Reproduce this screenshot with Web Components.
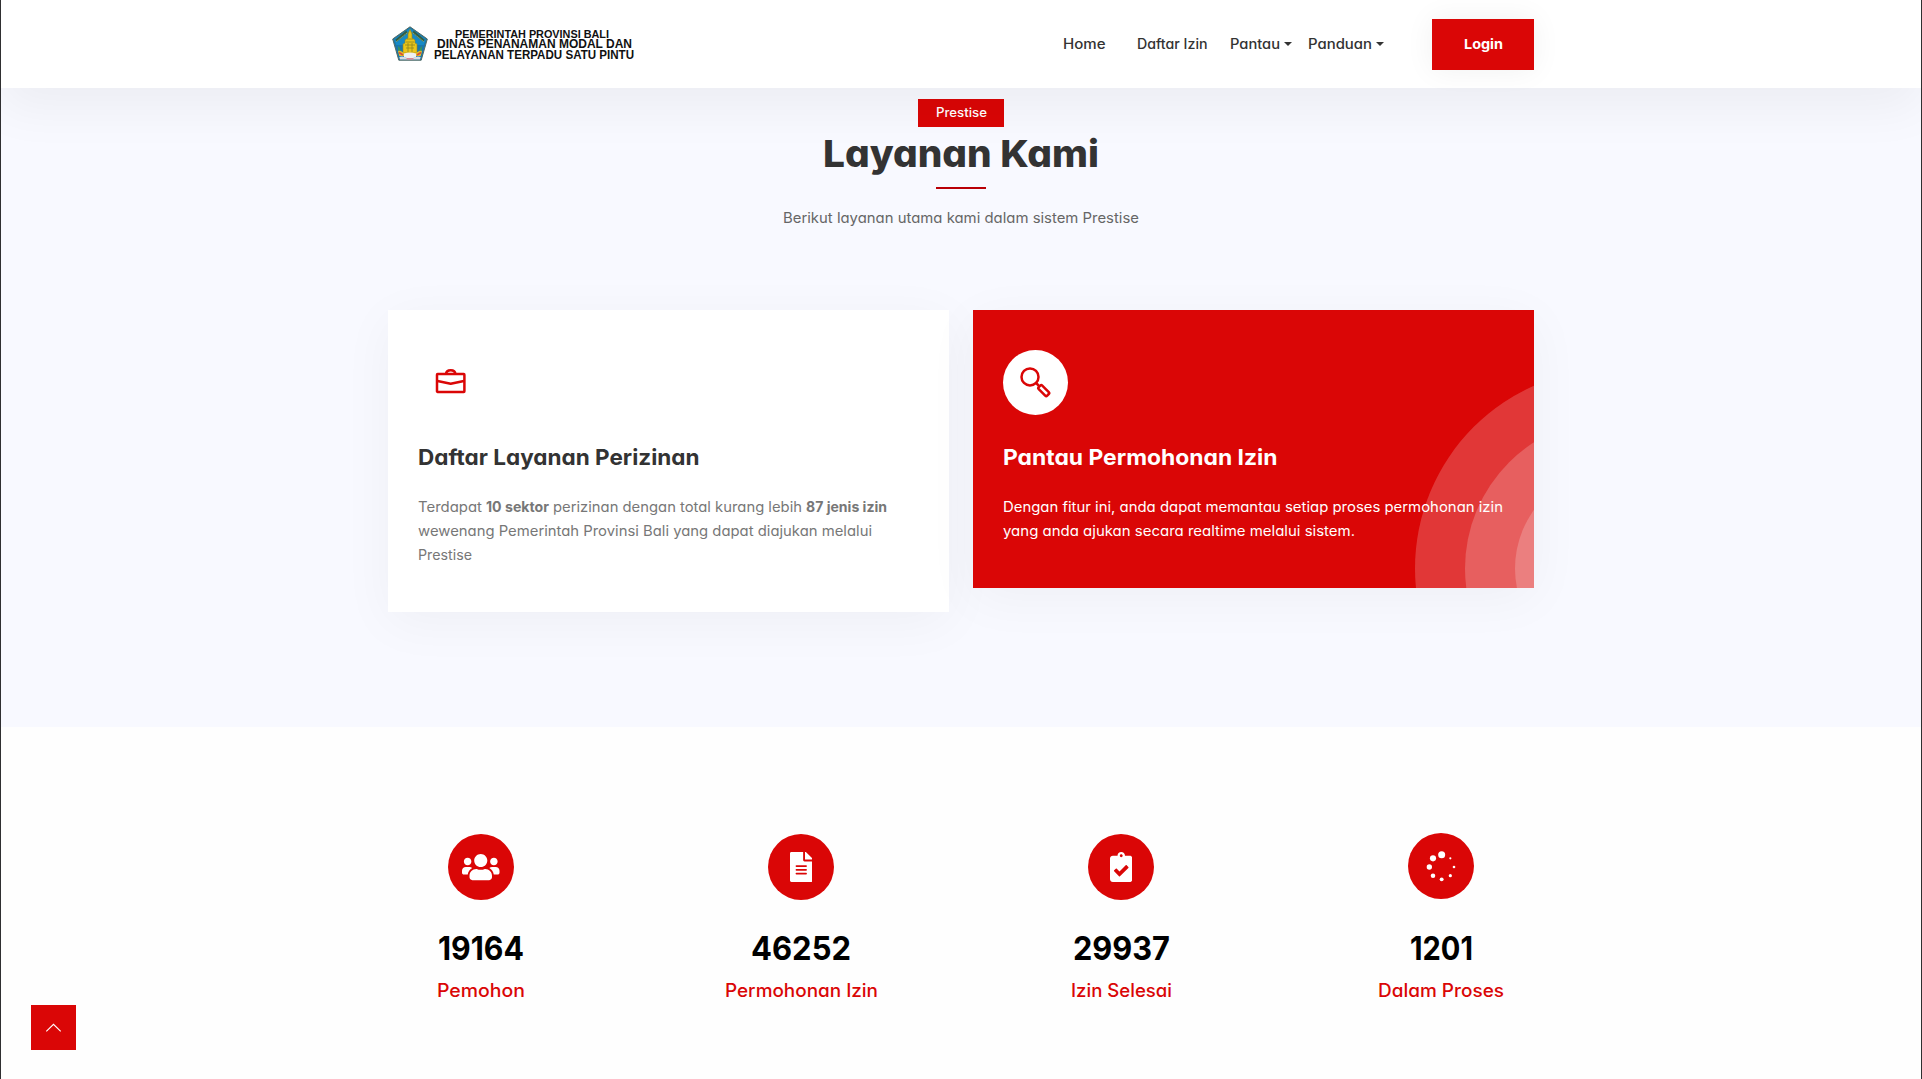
<!DOCTYPE html>
<html lang="id">
<head>
<meta charset="utf-8">
<title>Prestise</title>
<style>
  html, body { margin: 0; height: 100%; }
  body { font-family: Inter, "Open Sans", sans-serif; font-feature-settings: "cv11"; background: #fefefe; overflow: hidden; }
</style>
</head>
<body>
<prestise-page></prestise-page>
<script>
const ICONS = {
  briefcase: `<svg width="32" height="29" viewBox="0 0 32 29" fill="none" stroke="#da0606" stroke-width="2.5" stroke-linejoin="round"><rect x="2" y="6.1" width="27.4" height="17.8" rx=".6"/><path d="M11 6C11.2 3.4 13 2.2 15.700 2.2s4.500 1.200 4.700 3.800M2.500 13 15.700 15.700l13.200-2.700"/></svg>`,
  search: `<svg width="32" height="32" viewBox="0 0 32 32" fill="none" stroke="#da0606" stroke-width="2.5" stroke-linejoin="round"><circle cx="10" cy="9.900" r="8.500"/><path d="m16.100 16 2.800 2.800"/><rect x="-2.500" y="0" width="5" height="12" rx="1.400" transform="translate(19.500 19.300) rotate(-45)"/></svg>`,
  users: `<svg width="37.5" height="30" viewBox="0 0 640 512" fill="#fff"><path d="M96 224c35.300 0 64-28.700 64-64s-28.700-64-64-64-64 28.700-64 64 28.700 64 64 64zm448 0c35.300 0 64-28.700 64-64s-28.700-64-64-64-64 28.700-64 64 28.700 64 64 64zm32 32h-64c-17.600 0-33.500 7.100-45.100 18.600 40.300 22.100 68.900 62 75.100 109.400h66c17.700 0 32-14.300 32-32v-32c0-35.300-28.700-64-64-64zm-256 0c61.900 0 112-50.100 112-112S381.900 32 320 32 208 82.100 208 144s50.100 112 112 112zm76.800 32h-8.300c-20.800 10-43.900 16-68.500 16s-47.600-6-68.500-16h-8.300C179.600 288 128 339.600 128 403.200V432c0 26.500 21.500 48 48 48h288c26.500 0 48-21.500 48-48v-28.800c0-63.600-51.600-115.200-115.200-115.200zm-223.700-13.400C161.500 263.100 145.600 256 128 256H64c-35.300 0-64 28.700-64 64v32c0 17.700 14.300 32 32 32h65.900c6.300-47.400 34.900-87.300 75.200-109.400z"/></svg>`,
  file: `<svg width="22.5" height="30" viewBox="0 0 384 512" fill="#fff"><path d="M224 136V0H24C10.700 0 0 10.700 0 24v464c0 13.300 10.700 24 24 24h336c13.300 0 24-10.700 24-24V160H248c-13.200 0-24-10.800-24-24zm64 236c0 6.600-5.400 12-12 12H108c-6.600 0-12-5.400-12-12v-8c0-6.600 5.400-12 12-12h168c6.600 0 12 5.400 12 12v8zm0-64c0 6.600-5.400 12-12 12H108c-6.600 0-12-5.400-12-12v-8c0-6.600 5.400-12 12-12h168c6.600 0 12 5.400 12 12v8zm0-72v8c0 6.600-5.400 12-12 12H108c-6.600 0-12-5.400-12-12v-8c0-6.600 5.400-12 12-12h168c6.600 0 12 5.400 12 12zm96-114.100v6.100H256V0h6.100c6.400 0 12.500 2.500 17 7l97.900 98c4.500 4.500 7 10.600 7 16.900z"/></svg>`,
  clipboard: `<svg width="22.5" height="30" viewBox="0 0 384 512" fill="#fff"><path d="M336 64h-80c0-35.300-28.700-64-64-64s-64 28.700-64 64H48C21.500 64 0 85.500 0 112v352c0 26.500 21.500 48 48 48h288c26.500 0 48-21.500 48-48V112c0-26.500-21.500-48-48-48zM192 40c13.300 0 24 10.700 24 24s-10.700 24-24 24-24-10.700-24-24 10.700-24 24-24zm121.200 231.800l-143 141.800c-4.700 4.700-12.300 4.600-17-.1l-82.600-83.300c-4.700-4.700-4.600-12.300.1-17L99.100 285c4.700-4.700 12.300-4.600 17 .1l46 46.400 106-105.200c4.700-4.700 12.300-4.600 17 .1l28.200 28.400c4.700 4.800 4.600 12.300-.1 17z"/></svg>`,
  spinner: `<svg width="66" height="66" viewBox="0 0 198 198" fill="#fff"><circle cx="101" cy="65" r="10.500"/><circle cx="75" cy="76" r="9.200"/><circle cx="64" cy="102" r="8"/><circle cx="75" cy="128" r="6.800"/><circle cx="101" cy="139" r="5.800"/><circle cx="127" cy="128" r="4.800"/><circle cx="138" cy="102" r="3.900"/><circle cx="127" cy="76" r="3.300"/></svg>`,
  up: `<svg width="17" height="10" viewBox="0 0 17 10" fill="none" stroke="#fff" stroke-width="1.1"><path d="m1.300 8.300 7.200-7 7.200 7"/></svg>`,
  crest: `<svg width="36" height="36" viewBox="0 0 36 36"><path d="M18 .8 35.300 13 29.200 34.200H6.800L.7 13z" fill="#1976ad" stroke="#526b62" stroke-width="1"/><path d="M18 2.200 33.800 13.300 31.800 19H4.200L2.200 13.300z" fill="#168ac7"/><path d="M4 14.800 15 5.800M32 14.800 21 5.800" stroke="#315e46" stroke-width="2.600"/><path d="M4.500 15.500 15.500 6.600M31.500 15.500 20.500 6.600" stroke="#a9b971" stroke-width="1" stroke-dasharray="1.500 1"/><path d="M18 3.300 20 8v4l3 2v3l2 1v9H11v-9l2-1v-3l3-2V8z" fill="#e9c51a" stroke="#99851c" stroke-width=".6"/><path d="M15 13h6M14 16h8M13 19h10M14 22h8M16 17v9M20 17v9" stroke="#8d861f" stroke-width=".8"/><path d="M6 20c2 2 2.500 3 3 6l-2 3zM30 20c-2 2-2.500 3-3 6l2 3z" fill="#3c9850"/><path d="M6 25c4-1 5 3 8 2h8c3 1 4-3 8-2l-1.300 5H7.300z" fill="#e4bd2a"/><path d="M7 26.500l4 2.500M29 26.500 25 29" stroke="#d94b39" stroke-width="1.500"/><path d="M12 27.500q6-2 12 0v4q-6 1.500-12 0z" fill="#eef0f1"/><path d="M7.300 31q4-1.500 7 1h7.400q3-2.500 7-1l-.8 2.500H8z" fill="#d7dce4"/><path d="M14.500 32h7v1.600h-7z" fill="#d78792"/></svg>`
};

class UiIcon extends HTMLElement {
  connectedCallback() {
    this.attachShadow({ mode: "open" }).innerHTML =
      `<style>:host{display:flex;flex:none}svg{display:block}</style>${ICONS[this.getAttribute("name")]}`;
  }
}
customElements.define("ui-icon", UiIcon);

/* One line of text, its glyphs widened so that it fills the measure given in "w" (px). */
class FitText extends HTMLElement {
  connectedCallback() {
    this.attachShadow({ mode: "open" }).innerHTML =
      `<style>:host{display:inline-block;white-space:nowrap}span{display:inline-block;transform-origin:0 50%}</style><span><slot></slot></span>`;
    const span = this.shadowRoot.querySelector("span");
    const target = parseFloat(this.getAttribute("w"));
    const natural = span.getBoundingClientRect().width;
    this.style.width = target + "px";
    span.style.marginRight = (target - natural) + "px";
    span.style.transform = `scaleX(${(target / natural).toFixed(5)})`;
  }
}

class NavItem extends HTMLElement {
  connectedCallback() {
    this.attachShadow({ mode: "open" }).innerHTML = `<style>
      :host{display:flex;align-items:center;font-size:13.800px;line-height:20px;font-weight:500;color:#333}
      i{width:0;height:0;border:4px solid transparent;border-top-color:#333;border-bottom:0;margin-left:4px}
      </style><slot></slot>${this.hasAttribute("menu") ? "<i></i>" : ""}`;
  }
}
customElements.define("nav-item", NavItem);

class SiteHeader extends HTMLElement {
  connectedCallback() {
    this.attachShadow({ mode: "open" }).innerHTML = `<style>
      :host{display:flex;position:relative;z-index:2;height:88px;box-sizing:border-box;background:#fff;padding:0 387px 0 391px;align-items:center;justify-content:space-between;box-shadow:0 20px 50px rgba(0,0,0,.05)}
      .brand{display:flex;align-items:flex-start;gap:6px;padding-bottom:1px}
      .name{display:flex;flex-direction:column;align-items:center;font:700 12px/11px "Liberation Sans",Arial,sans-serif;color:#111;padding-top:3px}
      .name .top{font-size:11px;line-height:10px;margin-right:4px}
      nav{display:flex;align-items:center}
      .home{margin-right:31px}.reg{margin-right:23px}.track{margin-right:16px}.guide{margin-right:48px}
      .login{display:flex;width:102px;height:51px;align-items:center;justify-content:center;background:#da0606;color:#fff;font-weight:700;font-size:13.800px;line-height:20px;box-shadow:0 0 30px rgba(0,0,0,.06)}
      </style>
      <div class="brand"><ui-icon name="crest"></ui-icon>
        <div class="name"><fit-text class="top" w="154">PEMERINTAH PROVINSI BALI</fit-text><fit-text w="195">DINAS PENANAMAN MODAL DAN</fit-text><fit-text w="200">PELAYANAN TERPADU SATU PINTU</fit-text></div>
      </div>
      <nav>
        <nav-item class="home"><fit-text w="42.500">Home</fit-text></nav-item>
        <nav-item class="reg"><fit-text w="70.500">Daftar Izin</fit-text></nav-item>
        <nav-item class="track" menu><fit-text w="50">Pantau</fit-text></nav-item>
        <nav-item class="guide" menu><fit-text w="64">Panduan</fit-text></nav-item>
        <div class="login"><fit-text w="39">Login</fit-text></div>
      </nav>`;
  }
}

class SectionTitle extends HTMLElement {
  connectedCallback() {
    this.attachShadow({ mode: "open" }).innerHTML = `<style>
      :host{display:flex;flex-direction:column;align-items:center}
      .tag{display:flex;width:86px;height:28px;align-items:center;justify-content:center;background:#da0606;color:#fff;font-size:12.800px;line-height:18px;font-weight:500}
      h2{margin:4px 0 0;font-size:37.500px;line-height:46px;font-weight:800;color:#333}
      hr{width:50px;height:2px;border:0;margin:10px 0 0;background:#b90006}
      p{margin:19px 0 0;font-size:14.600px;line-height:20px;color:#666}
      </style>
      <div class="tag"><fit-text w="51">Prestise</fit-text></div>
      <h2><fit-text w="276">Layanan Kami</fit-text></h2><hr>
      <p><fit-text w="356">Berikut layanan utama kami dalam sistem Prestise</fit-text></p>`;
  }
}

class ServiceCard extends HTMLElement {
  connectedCallback() {
    this.attachShadow({ mode: "open" }).innerHTML = `<style>
      :host{display:block;box-sizing:border-box;width:561px;padding:40px 30px 0 30px;position:relative;background:#fff;color:#777;box-shadow:0 10px 50px rgba(0,0,0,.045);height:302px}
      :host([active]){background:#da0606;color:#fff;height:278px}
      .icon{display:flex;width:65px;height:65px;border-radius:50%;background:#fff;align-items:center;justify-content:center}
      .content{position:relative}
      .title{margin-top:27px;font-size:22px;line-height:30px;font-weight:650;color:#333;height:30px}
      :host([active]) .title{color:#fff}
      .text{margin-top:23px;font-size:14.200px;line-height:24px;display:flex;flex-direction:column;align-items:flex-start}
      .rings{position:absolute;inset:0;width:561px;height:278px;display:none}
      :host([active]) .rings{display:block}
      </style>
      <svg class="rings" viewBox="0 0 561 278" fill="#fff" fill-opacity=".2"><circle cx="642" cy="258.500" r="200"/><circle cx="642" cy="258.500" r="150"/><circle cx="642" cy="258.500" r="100"/></svg>
      <div class="content"><div class="icon"><ui-icon name="${this.getAttribute("icon")}"></ui-icon></div>
      <div class="title"><slot name="title"></slot></div>
      <div class="text"><slot></slot></div></div>`;
  }
}

class StatItem extends HTMLElement {
  connectedCallback() {
    const a = k => this.getAttribute(k);
    this.attachShadow({ mode: "open" }).innerHTML = `<style>
      :host{display:flex;flex-direction:column;align-items:center;width:320px}
      .disc{display:flex;width:66px;height:66px;border-radius:50%;background:#da0606;align-items:center;justify-content:center}
      .num{margin-top:28px;font-size:33px;line-height:40px;font-weight:650;color:#000}
      .label{margin-top:9px;font-size:18.300px;line-height:26px;font-weight:500;color:#da0606}
      :host([raised]) .disc{margin:-1px 0 1px}
      </style>
      <div class="disc"><ui-icon name="${a("icon")}"></ui-icon></div>
      <div class="num"><fit-text w="${a("nw")}">${a("value")}</fit-text></div>
      <div class="label"><fit-text w="${a("lw")}">${a("label")}</fit-text></div>`;
  }
}

class ToTop extends HTMLElement {
  connectedCallback() {
    this.attachShadow({ mode: "open" }).innerHTML = `<style>
      :host{position:absolute;left:30px;bottom:29px;width:45px;height:45px;display:flex;align-items:center;justify-content:center;background:#da0606}
      </style><ui-icon name="up"></ui-icon>`;
  }
}
customElements.define("to-top", ToTop);

class PrestisePage extends HTMLElement {
  connectedCallback() {
    this.attachShadow({ mode: "open" }).innerHTML = `<style>
      :host{display:block;position:relative;box-sizing:border-box;height:1079px;border-left:1px solid #2f2f31;border-right:1px solid #2f2f31;background:#fefefe;overflow:hidden}
      .services{height:639px;background:#f8f9ff;box-sizing:border-box;padding-top:11px}
      .cards{display:flex;justify-content:center;align-items:flex-start;gap:24px;margin-top:82px}
      .stats{display:flex;justify-content:center;padding-top:107px}
      b{font-weight:700}
      .row{display:flex;gap:4px}
      </style>
      <site-header></site-header>
      <section class="services">
        <section-title></section-title>
        <div class="cards">
          <service-card icon="briefcase">
            <fit-text slot="title" w="281.500">Daftar Layanan Perizinan</fit-text>
            <div class="row"><fit-text w="64">Terdapat</fit-text><b><fit-text w="63">10 sektor</fit-text></b><fit-text w="249">perizinan dengan total kurang lebih</fit-text><b><fit-text w="81">87 jenis izin</fit-text></b></div>
            <fit-text w="454">wewenang Pemerintah Provinsi Bali yang dapat diajukan melalui</fit-text>
            <fit-text w="54">Prestise</fit-text>
          </service-card>
          <service-card icon="search" active>
            <fit-text slot="title" w="274.500">Pantau Permohonan Izin</fit-text>
            <fit-text w="500">Dengan fitur ini, anda dapat memantau setiap proses permohonan izin</fit-text>
            <fit-text w="352">yang anda ajukan secara realtime melalui sistem.</fit-text>
          </service-card>
        </div>
      </section>
      <section class="stats">
        <stat-item icon="users" value="19164" nw="86" label="Pemohon" lw="88"></stat-item>
        <stat-item icon="file" value="46252" nw="100" label="Permohonan Izin" lw="153"></stat-item>
        <stat-item icon="clipboard" value="29937" nw="97" label="Izin Selesai" lw="101"></stat-item>
        <stat-item icon="spinner" raised value="1201" nw="63" label="Dalam Proses" lw="126"></stat-item>
      </section>
      <to-top></to-top>`;
  }
}
customElements.define("prestise-page", PrestisePage);
customElements.define("site-header", SiteHeader);
customElements.define("section-title", SectionTitle);
customElements.define("service-card", ServiceCard);
customElements.define("stat-item", StatItem);
customElements.define("fit-text", FitText);
</script>
</body>
</html>
